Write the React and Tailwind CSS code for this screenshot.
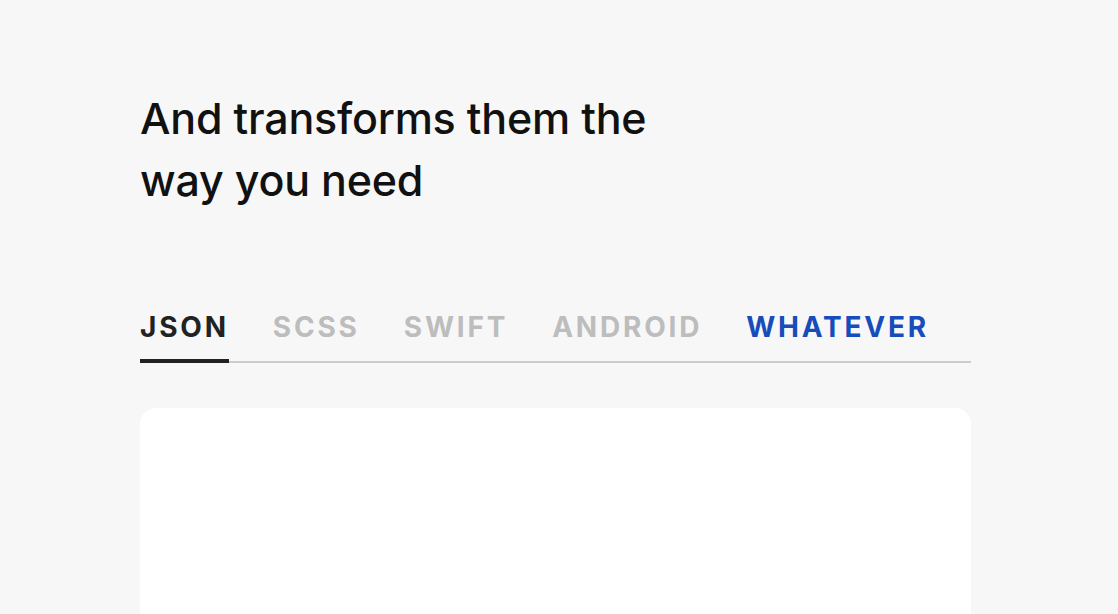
export default function App() {
  const tabs = [
    { label: "JSON", cls: "text-[#222222] border-b-4 border-[#222222]" },
    { label: "SCSS", cls: "text-[#bdbdbd] border-b-4 border-transparent" },
    { label: "SWIFT", cls: "text-[#bdbdbd] border-b-4 border-transparent" },
    { label: "ANDROID", cls: "text-[#bdbdbd] border-b-4 border-transparent" },
    { label: "WHATEVER", cls: "text-[#174cbb] border-b-4 border-transparent" },
  ];
  return (
    <div
      className="h-[614px] w-full bg-[#f7f7f7] overflow-hidden"
      style={{ fontFamily: "Inter, 'Noto Sans', sans-serif" }}
    >
      <div className="ml-[140px] w-[831px] pt-[87px]">
        <h1 className="w-[580px] text-[43px] leading-[62px] font-medium text-[#111111] tracking-[-0.005em]">
          And transforms them the way you need
        </h1>
        <div className="mt-[99px] flex gap-[44px] border-b-2 border-[#cccccc]">
          {tabs.map((t) => (
            <div
              key={t.label}
              className={`-mb-[2px] pb-[15px] text-[28px] leading-[34px] font-bold tracking-[0.1em] ${t.cls}`}
            >
              {t.label}
            </div>
          ))}
        </div>
        <div className="mt-[45px] h-[206px] rounded-t-2xl bg-white"></div>
      </div>
    </div>
  );
}
